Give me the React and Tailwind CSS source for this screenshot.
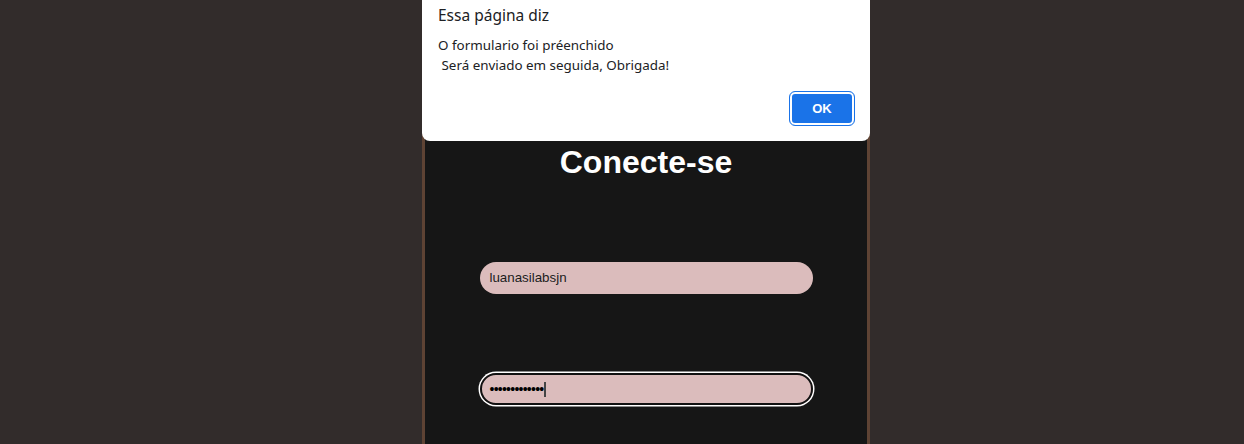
import React from "react";

export default function App() {
  return (
    <div className="min-h-[444px] h-[444px] overflow-hidden bg-[#322c2b] flex justify-center pl-[48px]">
      <div className="relative w-[448px] h-full border-x-[3px] border-[#5e4334] bg-[#161616] flex flex-col items-center">
        <h1 className="mt-[144px] text-[32px] font-bold text-white leading-[37px] font-['Liberation_Sans',Arial,sans-serif]">
          Conecte-se
        </h1>

        <div className="mt-[81px] w-[333px] h-[32px] rounded-full bg-[#dbbcbc] flex items-center pl-[10px] text-[13.33px] text-[#1c1c1c] font-['Liberation_Sans',Arial,sans-serif]">
          luanasilabsjn
        </div>

        <div className="mt-[79px] w-[333px] h-[32px] rounded-full bg-[#dbbcbc] flex items-center pl-[10px] shadow-[inset_0_0_0_2px_#111,0_0_0_1.5px_#fff]">
          <span className="text-[14px] tracking-[-0.75px] text-black font-['Liberation_Sans',Arial,sans-serif]">
            •••••••••••••
          </span>
          <span className="ml-[1px] w-[2px] h-[15px] bg-[#444]" />
        </div>

        <div className="absolute -left-[3px] -right-[3px] top-0 h-[141px] bg-white rounded-b-[8px] font-['Noto_Sans','Open_Sans',sans-serif] text-[#202124]">
          <div className="pl-[16px] pt-[4px] text-[15.5px] leading-[22px]">Essa página diz</div>
          <div className="pl-[16px] mt-[9px] text-[13.4px] leading-[20px] whitespace-pre">
            {"O formulario foi préenchido\n Será enviado em seguida, Obrigada!"}
          </div>
          <div className="absolute right-[16px] bottom-[16px]">
            <button className="w-[64px] h-[33px] rounded-[5px] bg-[#1a73e8] text-white text-[13px] font-bold shadow-[inset_0_0_0_2px_#fff] outline-1 outline-[#1a73e8] font-['Liberation_Sans',Arial,sans-serif]">
              OK
            </button>
          </div>
        </div>
      </div>
    </div>
  );
}
